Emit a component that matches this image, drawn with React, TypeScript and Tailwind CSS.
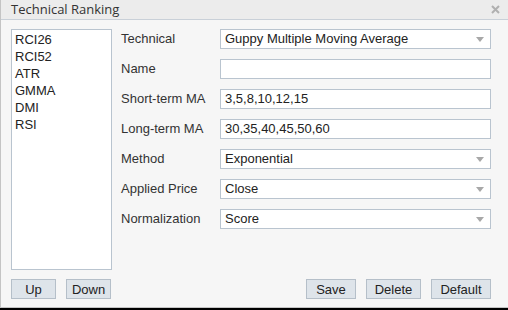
const indicators = ["RCI26", "RCI52", "ATR", "GMMA", "DMI", "RSI"];

type Row = { label: string; value: string; kind: "select" | "text" };

const rows: Row[] = [
  { label: "Technical", value: "Guppy Multiple Moving Average", kind: "select" },
  { label: "Name", value: "", kind: "text" },
  { label: "Short-term MA", value: "3,5,8,10,12,15", kind: "text" },
  { label: "Long-term MA", value: "30,35,40,45,50,60", kind: "text" },
  { label: "Method", value: "Exponential", kind: "select" },
  { label: "Applied Price", value: "Close", kind: "select" },
  { label: "Normalization", value: "Score", kind: "select" },
];

function Field({ row }: { row: Row }) {
  return (
    <div className="flex items-center h-5">
      <div className="w-[99px] text-[13px] text-[#333]">{row.label}</div>
      <div className="w-[271px] h-5 bg-white border border-[#b9c4cf] flex items-center pl-[4px] pr-[5px] text-[13px] text-[#222]">
        <span className="flex-1 truncate">{row.value}</span>
        {row.kind === "select" && (
          <svg width="8" height="5" viewBox="0 0 8 5" className="mr-[1px]">
            <path d="M0 0 L8 0 L4 5 Z" fill="#a8a8a8" />
          </svg>
        )}
      </div>
    </div>
  );
}

function Btn({ label, w }: { label: string; w: string }) {
  return (
    <button
      className={`${w} h-5 bg-[#dee4ea] border border-[#b5bfc9] text-[13px] text-[#222] leading-none flex items-center justify-center`}
    >
      {label}
    </button>
  );
}

export default function App() {
  return (
    <div className="w-[508px] h-[310px] bg-black" style={{ fontFamily: '"Liberation Sans", Arial, sans-serif' }}>
      <div className="h-[308px] bg-[#f6f6f6] border-l border-b border-[#c4c4c4] flex flex-col">
        <div className="h-5 bg-[#ececec] border-b border-[#c9d0d8] flex items-center justify-between pl-[10px] pr-[8px]">
          <span className="text-[13px] text-[#333]" style={{ fontFamily: '"Open Sans", sans-serif' }}>
            Technical Ranking
          </span>
          <svg width="9" height="9" viewBox="0 0 9 9">
            <path d="M1 1 L8 8 M8 1 L1 8" stroke="#b0b0b0" strokeWidth="2" />
          </svg>
        </div>
        <div className="flex pl-[10px] pt-[9px] gap-[9px]">
          <div className="flex flex-col gap-[9px]">
            <div className="w-[101px] h-[241px] bg-white border border-[#b9c4cf] pl-[3px] pt-[1px]">
              {indicators.map((name) => (
                <div key={name} className="text-[13px] leading-[17px] text-[#222]">
                  {name}
                </div>
              ))}
            </div>
            <div className="flex gap-[10px]">
              <Btn label="Up" w="w-[45px]" />
              <Btn label="Down" w="w-[45px]" />
            </div>
          </div>
          <div className="flex flex-col">
            <div className="flex flex-col gap-[10px] h-[250px]">
              {rows.map((row) => (
                <Field key={row.label} row={row} />
              ))}
            </div>
            <div className="flex justify-end gap-[10px]">
              <Btn label="Save" w="w-[50px]" />
              <Btn label="Delete" w="w-[55px]" />
              <Btn label="Default" w="w-[60px]" />
            </div>
          </div>
        </div>
      </div>
    </div>
  );
}
